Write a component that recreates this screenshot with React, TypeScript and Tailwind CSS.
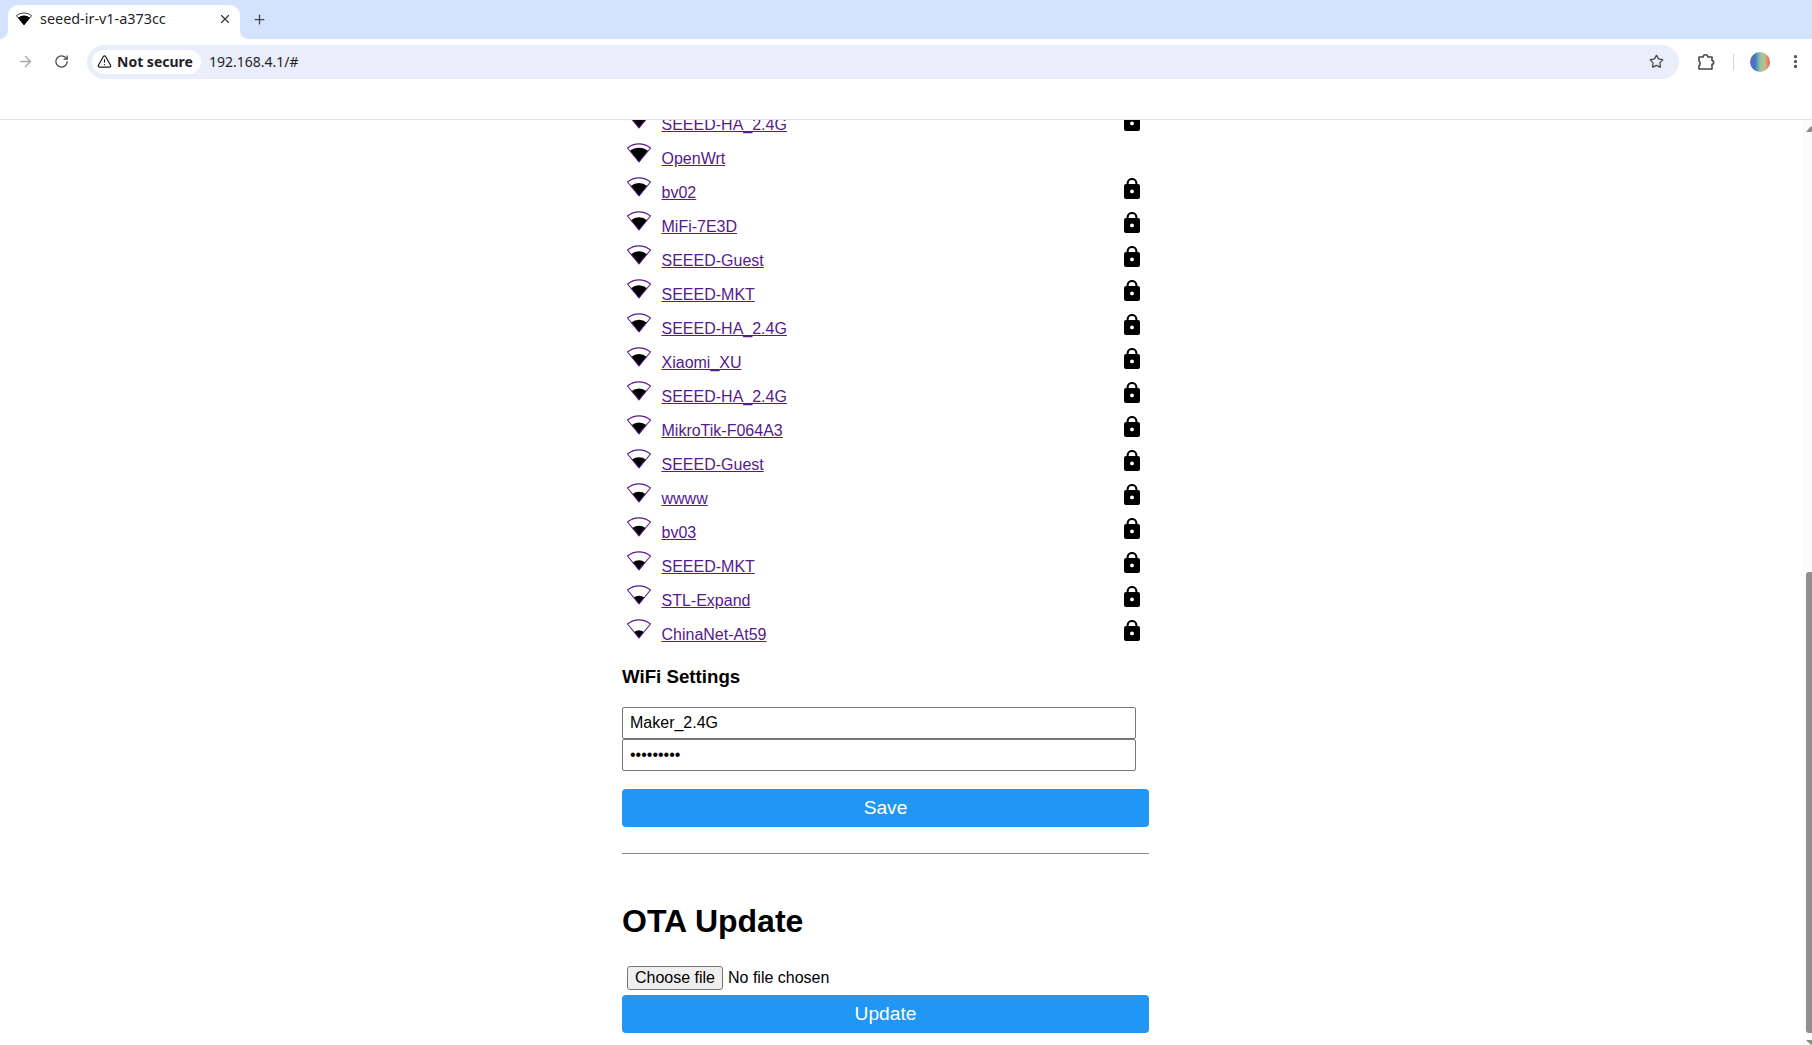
import React from 'react';
import { ArrowRight, RotateCw, TriangleAlert, Star, EllipsisVertical, X, Plus } from 'lucide-react';

const networks = [
  { name: 'SEEED-HA_2.4G', level: 0.82, locked: true },
  { name: 'OpenWrt', level: 0.79, locked: false },
  { name: 'bv02', level: 0.72, locked: true },
  { name: 'MiFi-7E3D', level: 0.7, locked: true },
  { name: 'SEEED-Guest', level: 0.7, locked: true },
  { name: 'SEEED-MKT', level: 0.7, locked: true },
  { name: 'SEEED-HA_2.4G', level: 0.68, locked: true },
  { name: 'Xiaomi_XU', level: 0.66, locked: true },
  { name: 'SEEED-HA_2.4G', level: 0.64, locked: true },
  { name: 'MikroTik-F064A3', level: 0.64, locked: true },
  { name: 'SEEED-Guest', level: 0.6, locked: true },
  { name: 'wwww', level: 0.57, locked: true },
  { name: 'bv03', level: 0.57, locked: true },
  { name: 'SEEED-MKT', level: 0.54, locked: true },
  { name: 'STL-Expand', level: 0.46, locked: true },
  { name: 'ChinaNet-At59', level: 0.43, locked: true },
];

const WifiIcon = ({ level, stroke = '#551a8b', className = '' }: { level: number; stroke?: string; className?: string }) => {
  const dx = 11.5 * level;
  const dy = 14 * level;
  const r = 18.1 * level;
  const wedge = `M${12 - dx} ${19 - dy}A${r} ${r} 0 0 1 ${12 + dx} ${19 - dy}L12 19Z`;
  return (
    <svg viewBox="0 0 24 20" className={`shrink-0 ${className}`}>
      <path d={wedge} fill="#000" />
      <path d="M0.5 5A18.1 18.1 0 0 1 23.5 5L12 19Z" fill="none" stroke={stroke} strokeWidth="1.1" strokeLinejoin="round" />
    </svg>
  );
};

const LockIcon = () => (
  <svg width="16" height="21" viewBox="0 0 16 21" className="ml-auto shrink-0">
    <path d="M3.6 8V5.4a4.4 4.4 0 0 1 8.8 0V8" fill="none" stroke="#000" strokeWidth="2.1" />
    <rect x="0" y="6" width="16" height="15" rx="2" fill="#000" />
    <circle cx="8" cy="13.4" r="1.9" fill="#fff" />
  </svg>
);

const ExtensionIcon = () => (
  <svg width="18" height="18" viewBox="0 0 18 18" fill="none" stroke="#474747" strokeWidth="1.6" strokeLinejoin="round" className="ml-[18px] shrink-0">
    <path d="M2 4h4.2c0-3 4.6-3 4.6 0H15v3.6c2.2 0 2.2 3.6 0 3.6V16H2v-3.2c1.4-1.2 1.4-3.6 0-4.8Z" />
  </svg>
);

export default function App() {
  return (
    <div className="h-[1045px] w-[1812px] overflow-hidden bg-white flex flex-col font-['Liberation_Sans',sans-serif] text-black">
      <div className="h-[39px] bg-[#d3e3fd] flex items-end shrink-0 font-['Noto_Sans',sans-serif]">
        <div className="relative ml-2 w-[232px] h-[34px] bg-white rounded-t-[10px] flex items-center pl-2 pr-2 text-[14.4px] text-[#1f1f1f]">
          <span className="absolute -left-2 bottom-0 w-2 h-2 bg-white">
            <span className="block w-2 h-2 bg-[#d3e3fd] rounded-br-[8px]" />
          </span>
          <span className="absolute -right-2 bottom-0 w-2 h-2 bg-white">
            <span className="block w-2 h-2 bg-[#d3e3fd] rounded-bl-[8px]" />
          </span>
          <WifiIcon level={0.78} stroke="#000" className="w-[16px] h-[14px] -mt-[6px]" />
          <span className="ml-2 flex-1 -mt-[7px] truncate">seeed-ir-v1-a373cc</span>
          <X size={14} strokeWidth={2} className="-mt-[6px] text-[#333]" />
        </div>
        <Plus size={15} strokeWidth={2} className="ml-[12px] mb-[12px] text-[#444]" />
      </div>

      <div className="h-[40px] pt-[5px] bg-white flex items-center shrink-0 font-['Noto_Sans',sans-serif]">
        <ArrowRight size={17} className="ml-[17px] text-[#aaa]" />
        <RotateCw size={15} className="ml-[20px] text-[#474747]" />
        <div className="ml-[18px] mt-px w-[1592px] h-[34px] pb-[1px] rounded-full bg-[#e9eefa] flex items-center px-[5px] text-[14px]">
          <div className="h-[24px] bg-white rounded-full flex items-center pl-[5px] pr-[8px] gap-[5px] font-bold text-[#1f1f1f]">
            <TriangleAlert size={15} strokeWidth={2} />
            <span>Not secure</span>
          </div>
          <span className="ml-[8px] text-[#1f1f1f]">192.168.4.1/#</span>
          <Star size={15} strokeWidth={2} className="ml-auto mr-[10px] text-[#474747]" />
        </div>
        <ExtensionIcon />
        <div className="ml-[18px] w-px h-[16px] bg-[#c7d7f5]" />
        <div className="ml-[16px] w-[20px] h-[20px] rounded-full bg-[linear-gradient(90deg,#7a5fc0,#3a78c8,#8cc5a0,#c9b98a,#ef5a45)]" />
        <EllipsisVertical size={17} strokeWidth={2.5} className="ml-[17px] text-[#474747]" />
      </div>

      <div className="h-[41px] bg-white border-b border-[#e2e2e2] shrink-0" />

      <div className="flex-1 flex min-h-0">
        <main className="flex-1 overflow-hidden">
          <div className="ml-[622px] w-[527px] -mt-[10px]">
            <ul>
              {networks.map((n, i) => (
                <li key={i} className="h-[34px] flex items-start pl-[5px] pr-[9px] text-[16px]">
                  <WifiIcon level={n.level} className="w-[24px] h-[20px] -mt-px" />
                  <a href="#" className="ml-[10.5px] mt-[6px] text-[#551a8b] underline leading-[18px]">{n.name}</a>
                  {n.locked && <LockIcon />}
                </li>
              ))}
            </ul>
            <h3 className="mt-[12px] text-[18.7px] font-bold leading-[22px]">WiFi Settings</h3>
            <input readOnly value="Maker_2.4G" className="block mt-[19px] w-[514px] h-[32px] border border-[#767676] rounded-[2px] px-[7px] text-[16px] bg-white" />
            <input readOnly type="password" value="123456789" className="block w-[514px] h-[32px] border border-[#767676] rounded-[2px] px-[7px] text-[16px] bg-white" />
            <button className="mt-[18px] w-full h-[38px] bg-[#2196f3] text-white text-[19.2px] rounded-[4px]">Save</button>
            <hr className="mt-[26px] border-[#8a8a8a]" />
            <h1 className="mt-[49px] text-[32px] font-bold leading-[37px]">OTA Update</h1>
            <div className="mt-[26px] flex items-center h-[24px] pl-[5px] text-[16px]">
              <button className="h-[24px] w-[96px] bg-[#efefef] border border-[#767676] rounded-[3px] text-[16px] leading-[20px]">Choose file</button>
              <span className="ml-[5px]">No file chosen</span>
            </div>
            <button className="mt-[5px] w-full h-[38px] bg-[#2196f3] text-white text-[19.2px] rounded-[4px]">Update</button>
          </div>
        </main>
        <div className="w-[9px] bg-[#fbfbfb] overflow-hidden shrink-0">
          <div className="w-[15px] flex flex-col items-center">
            <div className="mt-[6px] w-0 h-0 border-x-[5px] border-x-transparent border-b-[6px] border-b-[#8c8c8c]" />
            <div className="mt-[440px] w-[9px] h-[461px] rounded-[3px] bg-[#8f8f8f]" />
            <div className="mt-[7px] w-0 h-0 border-x-[5px] border-x-transparent border-t-[5px] border-t-[#8c8c8c]" />
          </div>
        </div>
      </div>
    </div>
  );
}
